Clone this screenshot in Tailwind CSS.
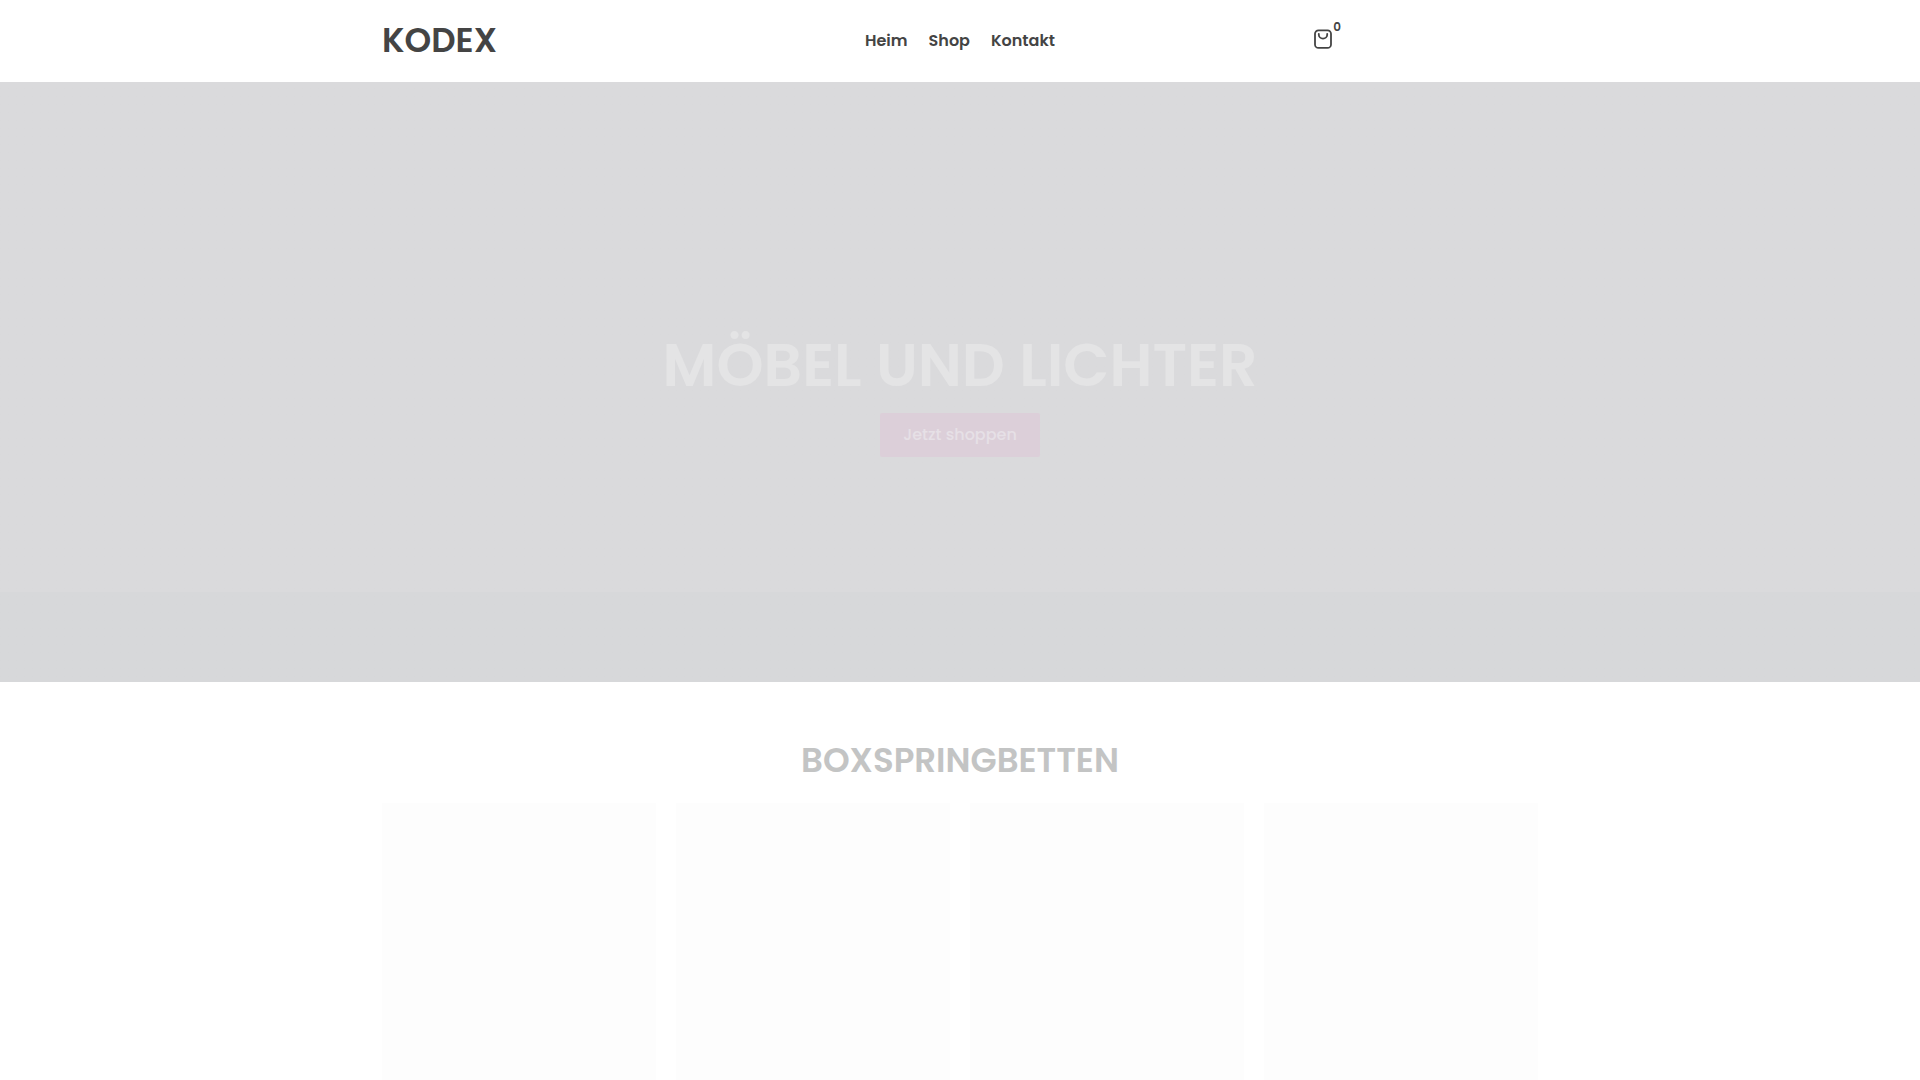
<!DOCTYPE html>
<html lang="de">
<head>
<meta charset="utf-8">
<meta name="viewport" content="width=device-width, initial-scale=1">
<title>KODEX</title>
<script src="https://cdn.jsdelivr.net/npm/@tailwindcss/browser@4"></script>
</head>
<body class="min-h-screen overflow-x-hidden bg-white font-['Poppins','Inter',sans-serif] text-[#444444]">
<header class="h-[82px]">
  <div class="mx-auto grid h-full w-full max-w-[1156px] grid-cols-3 items-center">
    <a href="#" class="pb-0.5 text-[34px] leading-10 font-semibold">KODEX</a>
    <nav class="flex justify-center gap-[21px] text-base font-semibold">
      <a href="#">Heim</a>
      <a href="#">Shop</a>
      <a href="#">Kontakt</a>
    </nav>
    <div class="flex justify-center pr-11 pb-1">
      <a href="#" aria-label="Warenkorb" class="relative block">
        <svg class="block size-6" viewBox="0 0 24 24" fill="none" stroke="currentColor" stroke-width="1.8" stroke-linecap="round"><rect x="4" y="3.300" width="16" height="17.600" rx="3.500"/><path d="M7.800 6.800v.7a4.200 4.200 0 0 0 8.400 0v-.7"/></svg>
        <span class="absolute -top-2 left-[22px] text-xs leading-4 font-semibold">0</span>
      </a>
    </div>
  </div>
</header>
<main>
  <section class="flex h-[600px] flex-col items-center justify-center gap-2 bg-linear-to-b from-[#dadadc] from-85% to-[#d7d8da] to-85% pt-[18px]">
    <h1 class="text-center text-[60px] leading-[80px] font-semibold text-[#e4e4e5]">MÖBEL UND LICHTER</h1>
    <button class="h-11 w-40 rounded-xs bg-[#dccfd9] text-base font-medium text-[#e6e0e6]">Jetzt shoppen</button>
  </section>
  <section class="mx-auto w-full max-w-[1156px] pt-14">
    <h2 class="text-center text-[34px] leading-[45px] font-semibold text-[#c3c4c4]">BOXSPRINGBETTEN</h2>
    <div class="mt-5 grid grid-cols-4 gap-5">
      <div class="h-[277px] bg-[#fdfdfd]"></div>
      <div class="h-[277px] bg-[#fdfdfd]"></div>
      <div class="h-[277px] bg-[#fdfdfd]"></div>
      <div class="h-[277px] bg-[#fdfdfd]"></div>
    </div>
  </section>
</main>
</body>
</html>
